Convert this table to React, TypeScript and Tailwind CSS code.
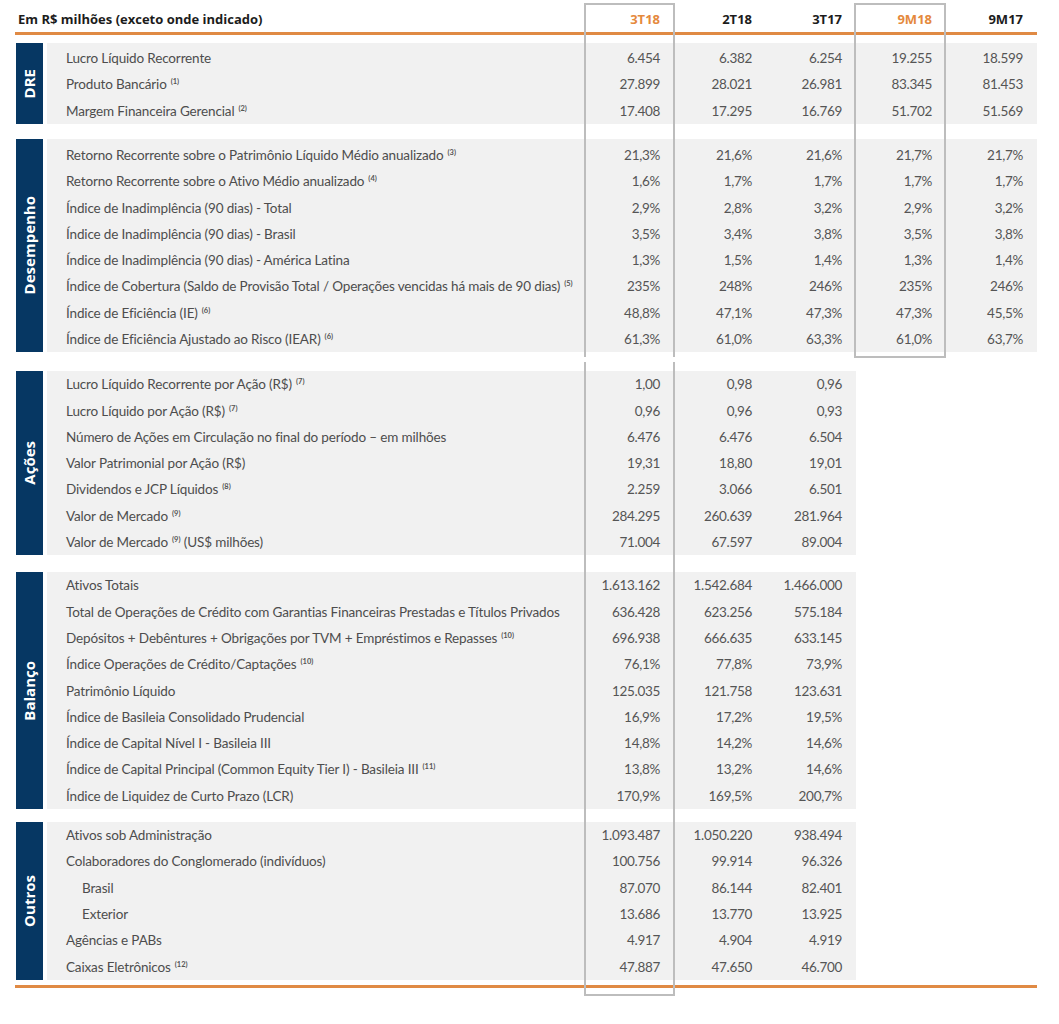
type Row = { label: string; sup?: string; indent?: boolean; tail?: string; values: string[] }
type Section = { name: string; full: boolean; rows: Row[]; gap: string; pad: string }

const sections: Section[] = [
  {
    name: 'DRE',
    full: true,
    gap: 'mt-[8px]',
    pad: 'pt-[2px]',
    rows: [
      { label: 'Lucro Líquido Recorrente', values: ['6.454', '6.382', '6.254', '19.255', '18.599'] },
      { label: 'Produto Bancário', sup: '(1)', values: ['27.899', '28.021', '26.981', '83.345', '81.453'] },
      { label: 'Margem Financeira Gerencial', sup: '(2)', values: ['17.408', '17.295', '16.769', '51.702', '51.569'] },
    ],
  },
  {
    name: 'Desempenho',
    full: true,
    gap: 'mt-[15px]',
    pad: 'pt-[3px]',
    rows: [
      { label: 'Retorno Recorrente sobre o Patrimônio Líquido Médio anualizado', sup: '(3)', values: ['21,3%', '21,6%', '21,6%', '21,7%', '21,7%'] },
      { label: 'Retorno Recorrente sobre o Ativo Médio anualizado', sup: '(4)', values: ['1,6%', '1,7%', '1,7%', '1,7%', '1,7%'] },
      { label: 'Índice de Inadimplência (90 dias) - Total', values: ['2,9%', '2,8%', '3,2%', '2,9%', '3,2%'] },
      { label: 'Índice de Inadimplência (90 dias) - Brasil', values: ['3,5%', '3,4%', '3,8%', '3,5%', '3,8%'] },
      { label: 'Índice de Inadimplência (90 dias) - América Latina', values: ['1,3%', '1,5%', '1,4%', '1,3%', '1,4%'] },
      { label: 'Índice de Cobertura (Saldo de Provisão Total / Operações vencidas há mais de 90 dias)', sup: '(5)', values: ['235%', '248%', '246%', '235%', '246%'] },
      { label: 'Índice de Eficiência (IE)', sup: '(6)', values: ['48,8%', '47,1%', '47,3%', '47,3%', '45,5%'] },
      { label: 'Índice de Eficiência Ajustado ao Risco (IEAR)', sup: '(6)', values: ['61,3%', '61,0%', '63,3%', '61,0%', '63,7%'] },
    ],
  },
  {
    name: 'Ações',
    full: false,
    gap: 'mt-[19px]',
    pad: 'pt-[0px]',
    rows: [
      { label: 'Lucro Líquido Recorrente por Ação (R$)', sup: '(7)', values: ['1,00', '0,98', '0,96'] },
      { label: 'Lucro Líquido por Ação (R$)', sup: '(7)', values: ['0,96', '0,96', '0,93'] },
      { label: 'Número de Ações em Circulação no final do período – em milhões', values: ['6.476', '6.476', '6.504'] },
      { label: 'Valor Patrimonial por Ação (R$)', values: ['19,31', '18,80', '19,01'] },
      { label: 'Dividendos e JCP Líquidos', sup: '(8)', values: ['2.259', '3.066', '6.501'] },
      { label: 'Valor de Mercado', sup: '(9)', values: ['284.295', '260.639', '281.964'] },
      { label: 'Valor de Mercado', sup: '(9)', tail: '(US$ milhões)', values: ['71.004', '67.597', '89.004'] },
    ],
  },
  {
    name: 'Balanço',
    full: false,
    gap: 'mt-[17px]',
    pad: 'pt-[0px]',
    rows: [
      { label: 'Ativos Totais', values: ['1.613.162', '1.542.684', '1.466.000'] },
      { label: 'Total de Operações de Crédito com Garantias Financeiras Prestadas e Títulos Privados', values: ['636.428', '623.256', '575.184'] },
      { label: 'Depósitos + Debêntures + Obrigações por TVM + Empréstimos e Repasses', sup: '(10)', values: ['696.938', '666.635', '633.145'] },
      { label: 'Índice Operações de Crédito/Captações', sup: '(10)', values: ['76,1%', '77,8%', '73,9%'] },
      { label: 'Patrimônio Líquido', values: ['125.035', '121.758', '123.631'] },
      { label: 'Índice de Basileia Consolidado Prudencial', values: ['16,9%', '17,2%', '19,5%'] },
      { label: 'Índice de Capital Nível I - Basileia III', values: ['14,8%', '14,2%', '14,6%'] },
      { label: 'Índice de Capital Principal (Common Equity Tier I) - Basileia III', sup: '(11)', values: ['13,8%', '13,2%', '14,6%'] },
      { label: 'Índice de Liquidez de Curto Prazo (LCR)', values: ['170,9%', '169,5%', '200,7%'] },
    ],
  },
  {
    name: 'Outros',
    full: false,
    gap: 'mt-[13px]',
    pad: 'pt-[0px]',
    rows: [
      { label: 'Ativos sob Administração', values: ['1.093.487', '1.050.220', '938.494'] },
      { label: 'Colaboradores do Conglomerado (indivíduos)', values: ['100.756', '99.914', '96.326'] },
      { label: 'Brasil', indent: true, values: ['87.070', '86.144', '82.401'] },
      { label: 'Exterior', indent: true, values: ['13.686', '13.770', '13.925'] },
      { label: 'Agências e PABs', values: ['4.917', '4.904', '4.919'] },
      { label: 'Caixas Eletrônicos', sup: '(12)', values: ['47.887', '47.650', '46.700'] },
    ],
  },
]

const colW = ['w-[90px]', 'w-[92px]', 'w-[90px]', 'w-[90px]', 'w-[91px]']

function Sup({ t }: { t: string }) {
  return <sup className="ml-[4px] text-[7.5px] font-bold tracking-normal top-[-5px] relative align-baseline text-[#555]">{t}</sup>
}

export default function App() {
  return (
    <div className="relative w-[1059px] h-[1024px] bg-white overflow-hidden font-['Lato','Liberation_Sans',sans-serif]">
      <div className="ml-[15px] w-[1022px]">
        {/* header */}
        <div className="flex h-[32px] pt-[8px] items-center text-[13px] font-bold text-[#1c1c1c] font-['Open_Sans','Liberation_Sans',sans-serif]">
          <div className="w-[569px] pl-[3px]">Em R$ milhões (exceto onde indicado)</div>
          {['3T18', '2T18', '3T17', '9M18', '9M17'].map((h, i) => (
            <div key={h} className={`${colW[i]} pr-[14px] text-right ${i === 0 || i === 3 ? 'text-[#e5893d]' : ''}`}>{h}</div>
          ))}
        </div>
        <div className="h-[3px] bg-[#e08a44]" />

        {sections.map((s) => (
          <div key={s.name} className={`flex ${s.gap}`}>
            <div className="ml-[1px] mr-[4px] w-[27px] bg-[#063763] flex items-center justify-center">
              <span className="[writing-mode:vertical-rl] rotate-180 text-white font-bold text-[15px] leading-none font-['Open_Sans','Liberation_Sans',sans-serif]">
                {s.name}
              </span>
            </div>
            <div className={`${s.full ? 'w-[990px]' : 'w-[809px]'} bg-[#f1f1f1] ${s.pad} text-[13.5px]`}>
              {s.rows.map((r, ri) => (
                <div key={ri} className="flex h-[26.3px] items-center">
                  <div className={`w-[537px] ${r.indent ? 'pl-[35px]' : 'pl-[19px]'} whitespace-nowrap tracking-[-0.15px] text-[#4d4d4d]`}>
                    {r.label}
                    {r.sup && <Sup t={r.sup} />}
                    {r.tail && <span> {r.tail}</span>}
                  </div>
                  {r.values.map((v, vi) => (
                    <div key={vi} className={`${colW[vi]} pr-[14px] text-right tracking-[-0.3px] text-[#555555]`}>{v}</div>
                  ))}
                </div>
              ))}
            </div>
          </div>
        ))}

        <div className="mt-[5px] h-[3px] bg-[#e08a44]" />
      </div>

      {/* highlight frames over the 3T18 and 9M18 columns */}
      <div className="absolute left-[584px] top-[3px] w-[91px] h-[354px] border-2 border-b-0 border-[#bdbdbd] pointer-events-none" />
      <div className="absolute left-[584px] top-[362px] w-[91px] h-[634px] border-2 border-t-0 border-[#bdbdbd] pointer-events-none" />
      <div className="absolute left-[854px] top-[3px] w-[92px] h-[355px] border-2 border-[#bdbdbd] pointer-events-none" />
    </div>
  )
}
